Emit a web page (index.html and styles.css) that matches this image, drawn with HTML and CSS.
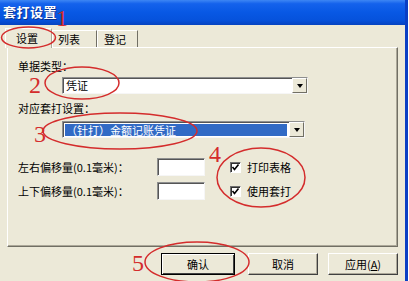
FILE: index.html
```html
<!DOCTYPE html>
<html lang="zh-CN">
<head>
    <meta charset="UTF-8">
    <title>套打设置</title>
    <link rel="stylesheet" href="styles.css">
</head>
<body>

    <div class="window">
        <div class="titlebar">套打设置</div>

        <div class="content">
            <div class="tabs">
                <div class="tab active">设置</div>
                <div class="tab">列表</div>
                <div class="tab last">登记</div>
            </div>

            <div class="panel">
                <div class="label">单据类型：</div>
                <div class="combo">
                    <div class="combo-text">凭证</div>
                    <div class="combo-btn"><span class="arrow"></span></div>
                </div>

                <div class="label second">对应套打设置：</div>
                <div class="combo combo-short">
                    <div class="combo-text selected">（针打）金额记账凭证</div>
                    <div class="combo-btn"><span class="arrow"></span></div>
                </div>

                <div class="row first">
                    <span class="row-label">左右偏移量(0.1毫米)：</span>
                    <span class="field"></span>
                    <span class="check">
                        <span class="box"><svg width="9" height="9" viewBox="0 0 9 9"><polyline points="1.5,4 3.5,6.5 7.5,1.5" fill="none" stroke="#000" stroke-width="1.6"/></svg></span>
                        打印表格
                    </span>
                </div>
                <div class="row">
                    <span class="row-label">上下偏移量(0.1毫米)：</span>
                    <span class="field"></span>
                    <span class="check">
                        <span class="box"><svg width="9" height="9" viewBox="0 0 9 9"><polyline points="1.5,4 3.5,6.5 7.5,1.5" fill="none" stroke="#000" stroke-width="1.6"/></svg></span>
                        使用套打
                    </span>
                </div>
            </div>

            <div class="buttons">
                <div class="btn default">确认</div>
                <div class="btn">取消</div>
                <div class="btn">应用(<u>A</u>)</div>
            </div>
        </div>

        <!-- red hand-drawn notes over the dialog -->
        <svg class="marks" width="409" height="281" viewBox="0 0 409 281">
            <g fill="none" stroke="#d42c2c" stroke-width="1.5">
                <ellipse cx="28.5" cy="37.5" rx="27" ry="10.5"/>
                <ellipse cx="82" cy="83" rx="37" ry="16"/>
                <ellipse cx="120" cy="131" rx="77" ry="18"/>
                <ellipse cx="261" cy="177.5" rx="44" ry="29.5"/>
                <ellipse cx="197" cy="262" rx="52" ry="20"/>
            </g>
            <g class="num" fill="#d42c2c">
                <text x="56" y="26">1</text>
                <text x="29" y="93">2</text>
                <text x="34" y="142">3</text>
                <text x="209" y="162">4</text>
                <text x="132" y="271">5</text>
            </g>
        </svg>
    </div>

</body>
</html>
```

FILE: styles.css
```css
* {
    margin: 0; padding: 0;
    box-sizing: border-box;
}
body {
    background: #fff;
    font-family: "Noto Sans CJK SC", "Liberation Sans", sans-serif;
    font-size: 11px;
    color: #000;
}
.window {
    position: relative;
    width: 408px;
    height: 281px;
    background: #ece9d8;
    border-right: 3px solid #0a3fc4;
    overflow: hidden;
}
.titlebar {
    height: 25px;
    line-height: 24px;
    padding-left: 3px;
    color: #fff;
    font-size: 13px;
    font-weight: bold;
    letter-spacing: 0.5px;
    text-shadow: 1px 1px 0 #0a2f8c;
    background: linear-gradient(to bottom, #3d86f4 0%, #1462ec 15%, #0858e4 50%, #0652dc 80%, #0643c0 100%);
}
.content {
    padding: 3px 7px 0 7px;
}

/* tabs */
.tabs {
    display: flex;
    align-items: flex-end;
    height: 19px;
    margin-left: -2px;
    position: relative;
    z-index: 1;
}
.tab {
    height: 17px;
    line-height: 16px;
    padding-left: 5px;
    border: 1px solid;
    border-color: #fff #716f64 transparent #fff;
    border-bottom: none;
    width: 45px;
}
.tab.active {
    height: 20px;
    line-height: 18px;
    width: 47px;
    margin-bottom: -1px;
    padding-left: 10px;
    background: #ece9d8;
    border-right-color: #aca899;
}
.tab.last { width: 41px; padding-left: 6px; }

.panel {
    width: 391px;
    height: 200px;
    border: 1px solid;
    border-color: #fff #716f64 #716f64 #fff;
    box-shadow: inset -1px -1px 0 #aca899;
    padding: 12px 0 0 10px;
}
.label {
    height: 12px;
    line-height: 12px;
}
.label.second { margin-top: 8px; }

/* combo boxes */
.combo {
    display: flex;
    width: 246px;
    height: 17px;
    margin: 5px 0 0 44px;
    background: #fff;
    border: 1px solid;
    border-color: #8e8f8f #f6f6f6 #f6f6f6 #8e8f8f;
    box-shadow: inset 1px 1px 0 #555;
}
.combo-short {
    width: 243px;
    margin-top: 7px;
}
.combo-text {
    flex: 1;
    padding-left: 3px;
    line-height: 15px;
}
.combo-text.selected {
    margin: 2px 2px 1px 2px;
    padding-left: 1px;
    line-height: 12px;
    background: #316ac5;
    color: #fff;
}
.combo-btn {
    width: 15px;
    background: #ece9d8;
    border: 1px solid;
    border-color: #fff #716f64 #716f64 #fff;
    display: flex;
    align-items: center;
    justify-content: center;
}
.arrow {
    width: 0; height: 0;
    border-left: 3px solid transparent;
    border-right: 3px solid transparent;
    border-top: 4px solid #000;
}

/* offset rows */
.row {
    display: flex;
    align-items: center;
    height: 18px;
    margin-top: 6px;
}
.row.first { margin-top: 20px; }
.row-label { width: 139px; }
.field {
    width: 48px;
    height: 18px;
    background: #fff;
    border: 1px solid;
    border-color: #8e8f8f #f6f6f6 #f6f6f6 #8e8f8f;
    box-shadow: inset 1px 1px 0 #555;
}
.check {
    display: flex;
    align-items: center;
    gap: 6px;
    margin-left: 25px;
}
.box {
    width: 11px;
    height: 11px;
    background: #fff;
    border: 1px solid;
    border-color: #6e6e6e #fff #fff #6e6e6e;
    box-shadow: inset 1px 1px 0 #303030;
    display: flex;
    align-items: center;
    justify-content: center;
}

/* buttons */
.buttons {
    display: flex;
    justify-content: flex-end;
    margin-top: 6px;
}
.btn {
    width: 70px;
    height: 22px;
    line-height: 20px;
    margin-left: 10px;
    text-align: center;
    border: 1px solid;
    border-color: #fff #404040 #404040 #fff;
    box-shadow: inset -1px -1px 0 #aca899;
}
.btn.default {
    width: 74px;
    margin-right: 3px;
    border-color: #000;
    box-shadow: inset 1px 1px 0 #fff, inset -1px -1px 0 #404040;
}

.marks {
    position: absolute;
    top: 0; left: 0;
    z-index: 2;
    pointer-events: none;
}
.num text {
    font-family: "Liberation Serif", serif;
    font-size: 24px;
}
```
